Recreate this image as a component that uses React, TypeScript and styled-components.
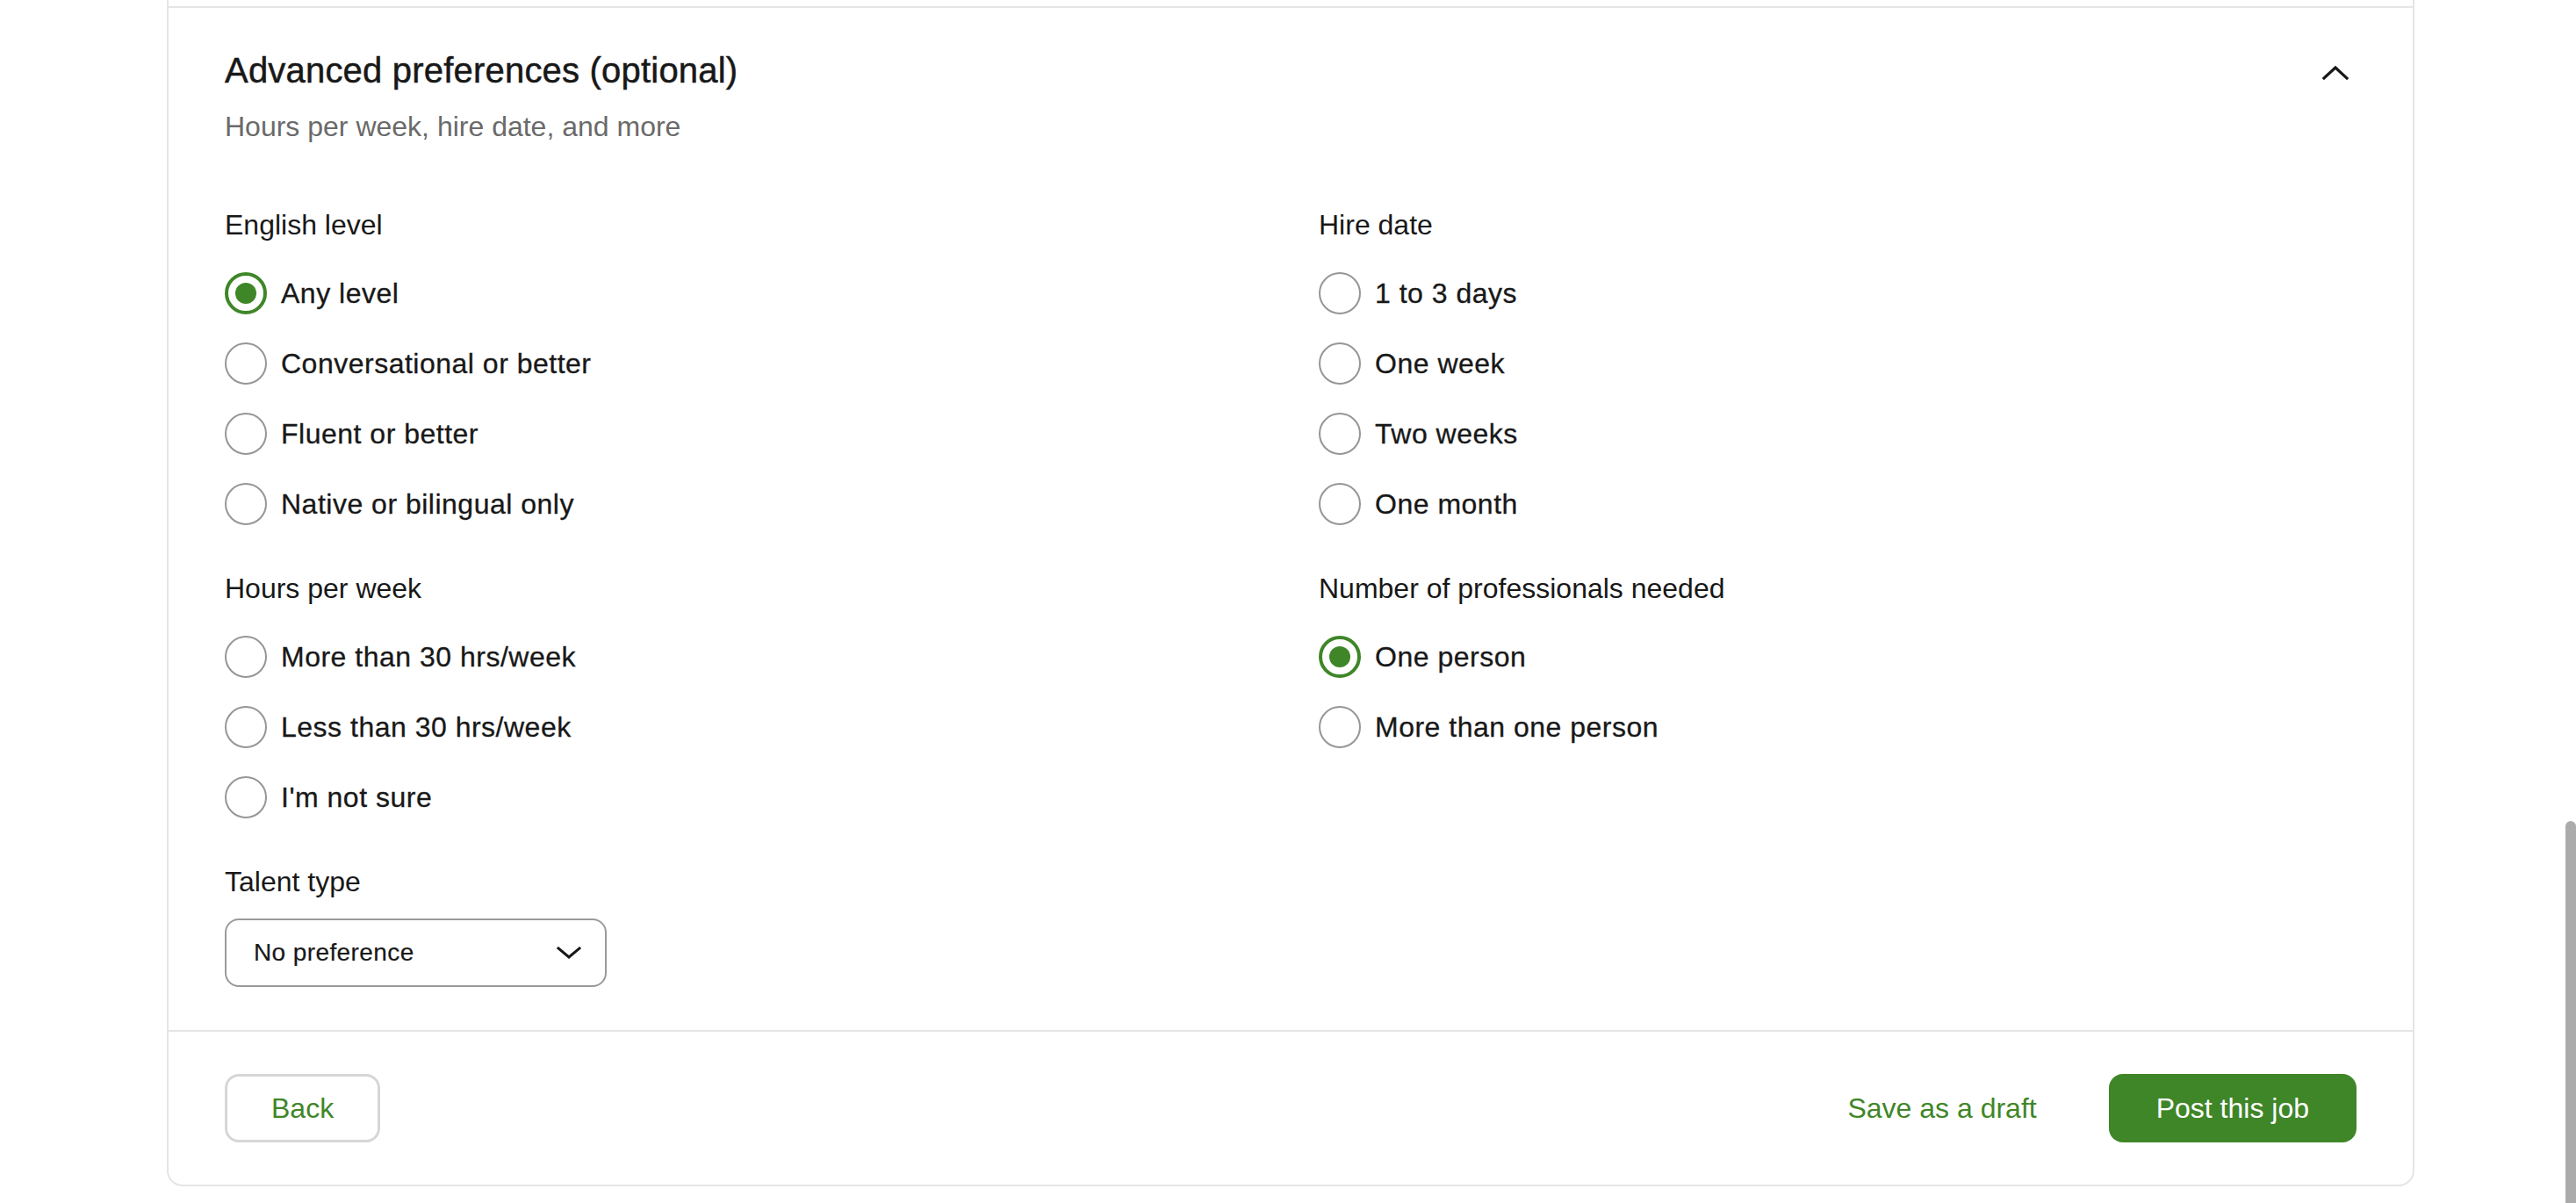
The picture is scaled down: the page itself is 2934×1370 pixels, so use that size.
import React from "react";
import styled, { createGlobalStyle } from "styled-components";

const GREEN = "#3f8628";
const TEXT = "#181818";
const LINE = "#e5e5e5";

const GlobalStyle = createGlobalStyle`
  html, body {
    margin: 0;
    padding: 0;
    background: #ffffff;
  }
  body {
    font-family: "Liberation Sans", Arial, Helvetica, sans-serif;
    color: ${TEXT};
    overflow: hidden;
  }
  *, *::before, *::after {
    box-sizing: border-box;
  }
`;

const Page = styled.div`
  padding-left: 190px;
  height: 1370px;
`;

const Card = styled.div`
  width: 2560px;
  border: 2px solid ${LINE};
  border-top: none;
  border-radius: 0 0 18px 18px;
  padding-top: 7px;
  background: #ffffff;
`;

const Section = styled.section`
  border-top: 2px solid ${LINE};
  padding: 47px 64px 49px;
`;

const Header = styled.div`
  display: flex;
  justify-content: space-between;
  align-items: flex-start;
`;

const HeaderText = styled.div`
  display: flex;
  flex-direction: column;
  gap: 16px;
`;

const Title = styled.h2`
  margin: 0;
  font-size: 40px;
  line-height: 48px;
  font-weight: 500;
  letter-spacing: 0.2px;
  -webkit-text-stroke: 0.5px ${TEXT};
  color: ${TEXT};
`;

const Subtitle = styled.p`
  margin: 0;
  font-size: 32px;
  line-height: 48px;
  color: #6a6a6a;
`;

const CollapseButton = styled.button`
  width: 48px;
  height: 48px;
  margin-top: 2px;
  padding: 0;
  border: none;
  background: none;
  display: flex;
  align-items: center;
  justify-content: center;
  color: ${TEXT};
  cursor: pointer;
`;

const Columns = styled.div`
  display: grid;
  grid-template-columns: 1fr 1fr;
  column-gap: 64px;
  margin-top: 64px;
`;

const Column = styled.div`
  display: flex;
  flex-direction: column;
  gap: 48px;
`;

const Field = styled.div<{ $gap: number }>`
  display: flex;
  flex-direction: column;
  gap: ${(p) => p.$gap}px;
`;

const FieldLabel = styled.div`
  font-size: 32px;
  line-height: 48px;
  color: ${TEXT};
`;

const RadioList = styled.div`
  display: flex;
  flex-direction: column;
  gap: 32px;
`;

const RadioRow = styled.label`
  display: flex;
  align-items: center;
  gap: 16px;
  height: 48px;
  font-size: 32px;
  letter-spacing: 0.5px;
  -webkit-text-stroke: 0.3px ${TEXT};
  color: ${TEXT};
  cursor: pointer;
`;

const RadioCircle = styled.span<{ $checked: boolean }>`
  flex: none;
  width: 48px;
  height: 48px;
  border-radius: 50%;
  border: ${(p) => (p.$checked ? `4px solid ${GREEN}` : "2px solid #969696")};
  display: flex;
  align-items: center;
  justify-content: center;
  background: #ffffff;

  &::after {
    content: "";
    display: ${(p) => (p.$checked ? "block" : "none")};
    width: 24px;
    height: 24px;
    border-radius: 50%;
    background: ${GREEN};
  }
`;

const SelectBox = styled.button`
  width: 435px;
  height: 78px;
  border: 2px solid #9a9a9a;
  border-radius: 16px;
  background: #ffffff;
  padding: 0 27px 0 31px;
  display: flex;
  align-items: center;
  justify-content: space-between;
  font-family: inherit;
  font-size: 28px;
  letter-spacing: 0.4px;
  -webkit-text-stroke: 0.2px ${TEXT};
  color: ${TEXT};
  cursor: pointer;
`;

const Footer = styled.div`
  border-top: 2px solid ${LINE};
  padding: 48px 64px;
  display: flex;
  align-items: center;
  justify-content: space-between;
`;

const Actions = styled.div`
  display: flex;
  align-items: center;
  gap: 82px;
`;

const BaseButton = styled.button`
  height: 78px;
  border-radius: 16px;
  font-family: inherit;
  font-size: 32px;
  display: inline-flex;
  align-items: center;
  justify-content: center;
  cursor: pointer;
`;

const SecondaryButton = styled(BaseButton)`
  padding: 0 50px;
  border: 3px solid #d6d6d6;
  background: #ffffff;
  color: ${GREEN};
`;

const TextButton = styled(BaseButton)`
  padding: 0;
  border: none;
  background: none;
  color: ${GREEN};
`;

const PrimaryButton = styled(BaseButton)`
  padding: 0 54px;
  border: none;
  background: ${GREEN};
  color: #ffffff;
`;

const ScrollThumb = styled.div`
  position: fixed;
  right: 0;
  top: 935px;
  bottom: 0;
  width: 12px;
  background: #ababab;
  border-radius: 6px 6px 0 0;
`;

const ChevronUp = () => (
  <svg width="48" height="48" viewBox="0 0 24 24" fill="none" stroke="currentColor" strokeWidth="1.6" strokeLinecap="square" strokeLinejoin="miter">
    <path d="M5.5 15.5 L12 9.5 L18.5 15.5" />
  </svg>
);

const ChevronDown = () => (
  <svg width="28" height="14" viewBox="0 0 28 14" fill="none" stroke="currentColor" strokeWidth="3" strokeLinecap="square" strokeLinejoin="miter">
    <path d="M2 2 L14 12 L26 2" />
  </svg>
);

type Group = { label: string; options: string[]; selected: number };

const leftGroups: Group[] = [
  {
    label: "English level",
    options: ["Any level", "Conversational or better", "Fluent or better", "Native or bilingual only"],
    selected: 0,
  },
  {
    label: "Hours per week",
    options: ["More than 30 hrs/week", "Less than 30 hrs/week", "I'm not sure"],
    selected: -1,
  },
];

const rightGroups: Group[] = [
  {
    label: "Hire date",
    options: ["1 to 3 days", "One week", "Two weeks", "One month"],
    selected: -1,
  },
  {
    label: "Number of professionals needed",
    options: ["One person", "More than one person"],
    selected: 0,
  },
];

const RadioGroup = ({ group }: { group: Group }) => (
  <Field $gap={30}>
    <FieldLabel>{group.label}</FieldLabel>
    <RadioList>
      {group.options.map((opt, i) => (
        <RadioRow key={opt}>
          <RadioCircle $checked={i === group.selected} />
          {opt}
        </RadioRow>
      ))}
    </RadioList>
  </Field>
);

export default function App() {
  return (
    <>
      <GlobalStyle />
      <Page>
        <Card>
          <Section>
            <Header>
              <HeaderText>
                <Title>Advanced preferences (optional)</Title>
                <Subtitle>Hours per week, hire date, and more</Subtitle>
              </HeaderText>
              <CollapseButton aria-label="Collapse">
                <ChevronUp />
              </CollapseButton>
            </Header>
            <Columns>
              <Column>
                {leftGroups.map((g) => (
                  <RadioGroup key={g.label} group={g} />
                ))}
                <Field $gap={18}>
                  <FieldLabel>Talent type</FieldLabel>
                  <SelectBox>
                    No preference
                    <ChevronDown />
                  </SelectBox>
                </Field>
              </Column>
              <Column>
                {rightGroups.map((g) => (
                  <RadioGroup key={g.label} group={g} />
                ))}
              </Column>
            </Columns>
          </Section>
          <Footer>
            <SecondaryButton>Back</SecondaryButton>
            <Actions>
              <TextButton>Save as a draft</TextButton>
              <PrimaryButton>Post this job</PrimaryButton>
            </Actions>
          </Footer>
        </Card>
      </Page>
      <ScrollThumb />
    </>
  );
}
